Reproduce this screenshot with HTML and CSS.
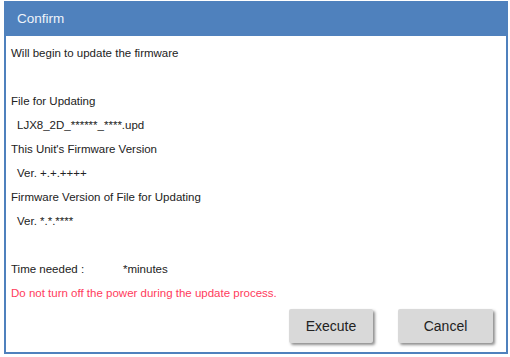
FILE: index.html
```html
<!DOCTYPE html>
<html lang="en">
<head>
  <meta charset="UTF-8">
  <title>Confirm</title>
  <link rel="stylesheet" href="styles.css">
</head>
<body>
  <div class="dialog">
    <div class="title">Confirm</div>
    <div class="content">
      <p>Will begin to update the firmware</p>
      <p class="blank"></p>
      <p>File for Updating</p>
      <p class="indent">LJX8_2D_******_****.upd</p>
      <p>This Unit's Firmware Version</p>
      <p class="indent">Ver. +.+.++++</p>
      <p>Firmware Version of File for Updating</p>
      <p class="indent">Ver. *.*.****</p>
      <p class="blank"></p>
      <p class="time"><span class="label">Time needed :</span><span>*minutes</span></p>
      <p class="warning">Do not turn off the power during the update process.</p>
    </div>
    <div class="buttons">
      <button>Execute</button>
      <button>Cancel</button>
    </div>
  </div>
</body>
</html>
```

FILE: styles.css
```css
body {
  margin: 0;
  padding: 1px 0 0 4px;
  font-family: "Liberation Sans", Arial, sans-serif;
  background-color: #fff;
}

.dialog {
  width: 500px;
  height: 350px;
  border: 2px solid #4f81bd;
  border-top-width: 1px;
  background-color: #fff;
  display: flex;
  flex-direction: column;
}

.title {
  height: 34px;
  line-height: 34px;
  background-color: #4f81bd;
  color: #eef3fa;
  font-size: 13.5px;
  padding-left: 11px;
}

.content {
  padding: 5px 0 0 5px;
  font-size: 11.5px;
  color: #222;
}

.content p {
  margin: 0;
  height: 24px;
  line-height: 24px;
}

.content .indent {
  padding-left: 6px;
}

.time .label {
  display: inline-block;
  width: 112px;
}

.warning {
  color: #ff3b5c;
}

.buttons {
  display: flex;
  justify-content: flex-end;
  gap: 25px;
  padding: 4px 13px 0 0;
}

button {
  font-family: "Liberation Sans", Arial, sans-serif;
  font-size: 14px;
  color: #222;
  background-color: #d9d9d9;
  border: none;
  border-radius: 2px;
  width: 84px;
  height: 34px;
  box-shadow: 2px 2px 3px rgba(0, 0, 0, 0.45);
}

button + button {
  width: 95px;
}
```
